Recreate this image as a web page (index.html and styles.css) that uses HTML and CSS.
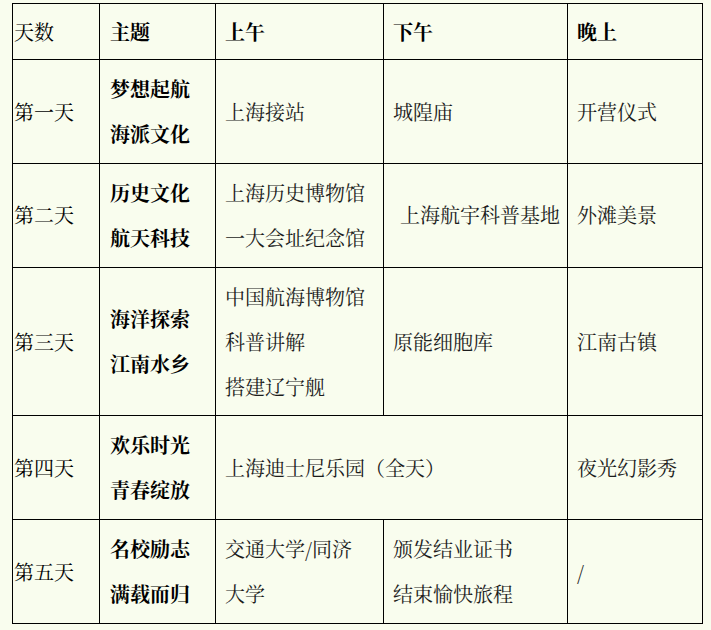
FILE: index.html
```html
<!DOCTYPE html>
<html lang="zh-CN">
<head>
<meta charset="utf-8">
<title>行程表</title>
<link rel="stylesheet" href="styles.css">
</head>
<body>
<table class="plan">
  <colgroup>
    <col class="c-day">
    <col class="c-theme">
    <col class="c-am">
    <col class="c-pm">
    <col class="c-eve">
  </colgroup>
  <thead>
    <tr class="head">
      <th class="day">天数</th>
      <th class="theme">主题</th>
      <th>上午</th>
      <th>下午</th>
      <th>晚上</th>
    </tr>
  </thead>
  <tbody>
    <tr>
      <td class="day">第一天</td>
      <td class="theme">梦想起航<br>海派文化</td>
      <td>上海接站</td>
      <td>城隍庙</td>
      <td>开营仪式</td>
    </tr>
    <tr>
      <td class="day">第二天</td>
      <td class="theme">历史文化<br>航天科技</td>
      <td>上海历史博物馆<br>一大会址纪念馆</td>
      <td class="indent">上海航宇科普基地</td>
      <td>外滩美景</td>
    </tr>
    <tr>
      <td class="day">第三天</td>
      <td class="theme">海洋探索<br>江南水乡</td>
      <td>中国航海博物馆<br>科普讲解<br>搭建辽宁舰</td>
      <td>原能细胞库</td>
      <td>江南古镇</td>
    </tr>
    <tr>
      <td class="day">第四天</td>
      <td class="theme">欢乐时光<br>青春绽放</td>
      <td colspan="2">上海迪士尼乐园（全天）</td>
      <td>夜光幻影秀</td>
    </tr>
    <tr>
      <td class="day">第五天</td>
      <td class="theme">名校励志<br>满载而归</td>
      <td>交通大学/同济<br>大学</td>
      <td>颁发结业证书<br>结束愉快旅程</td>
      <td>/</td>
    </tr>
  </tbody>
</table>
</body>
</html>
```

FILE: styles.css
```css
html, body {
  margin: 0;
  padding: 0;
  background: #f9fdee;
}

body {
  padding: 3px 0 0 12px;
  font-family: "Noto Serif CJK SC", "Noto Sans CJK SC", "DejaVu Serif", serif;
  font-size: 20px;
  color: #1c1c1c;
}

.plan {
  border-collapse: collapse;
  table-layout: fixed;
  width: 690px;
  border: 1px solid #000;
}

.c-day { width: 87px; }
.c-theme { width: 116px; }
.c-am { width: 168px; }
.c-pm { width: 184px; }
.c-eve { width: 135px; }

.plan th,
.plan td {
  border: 1px solid #000;
  text-align: left;
  vertical-align: middle;
  line-height: 45px;
  padding: 6px 8px 6.8px 9px;
  font-weight: normal;
  white-space: nowrap;
}

.plan .head th {
  padding-top: 5px;
  padding-bottom: 5px;
  font-weight: bold;
  color: #000;
}

.plan .head th.day {
  font-weight: normal;
}

.plan .day {
  padding-left: 1px;
  padding-right: 0;
  color: #000;
}

.plan td.theme {
  font-weight: bold;
  color: #000;
}

.plan .theme {
  padding-left: 10px;
}

.plan td.indent {
  padding-left: 16px;
}
```
